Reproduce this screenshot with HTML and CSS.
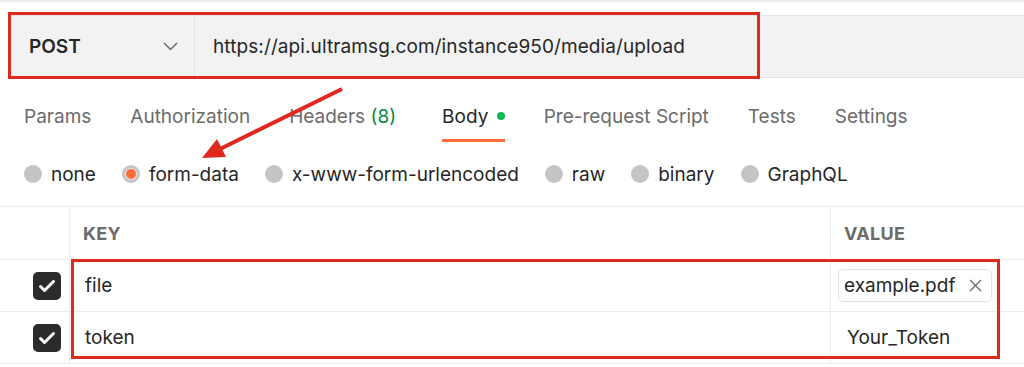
FILE: index.html
```html
<!DOCTYPE html>
<html lang="en">
<head>
    <meta charset="UTF-8">
    <meta name="viewport" content="width=device-width, initial-scale=1.0">
    <title>Upload Media</title>
    <link rel="stylesheet" href="styles.css">
</head>
<body>
    <div class="topline"></div>

    <!-- Method + URL -->
    <div class="request-bar">
        <div class="method">
            <span>POST</span>
            <svg class="chevron" width="15" height="9" viewBox="0 0 15 9">
                <path d="M1 1l6.5 6.5L14 1" fill="none" stroke="#6b6b6b" stroke-width="1.5"/>
            </svg>
        </div>
        <div class="url">https://api.ultramsg.com/instance950/media/upload</div>
    </div>

    <!-- Request tabs -->
    <div class="tabs">
        <div class="tab">Params</div>
        <div class="tab">Authorization</div>
        <div class="tab">Headers <span class="count">(8)</span></div>
        <div class="tab active">Body <span class="dot"></span></div>
        <div class="tab">Pre-request Script</div>
        <div class="tab">Tests</div>
        <div class="tab">Settings</div>
    </div>

    <!-- Body type -->
    <div class="body-types">
        <label class="option"><span class="radio"></span>none</label>
        <label class="option"><span class="radio checked"></span>form-data</label>
        <label class="option"><span class="radio"></span>x-www-form-urlencoded</label>
        <label class="option"><span class="radio"></span>raw</label>
        <label class="option"><span class="radio"></span>binary</label>
        <label class="option"><span class="radio"></span>GraphQL</label>
    </div>

    <!-- Form data table -->
    <div class="kv-table">
        <div class="cell check-col"></div>
        <div class="cell head">KEY</div>
        <div class="cell head value-col">VALUE</div>

        <div class="cell check-col">
            <span class="checkbox">
                <svg width="18" height="14" viewBox="0 0 18 14"><path d="M2.5 7.5l4 4 9-9" fill="none" stroke="#fff" stroke-width="3" stroke-linecap="round" stroke-linejoin="round"/></svg>
            </span>
        </div>
        <div class="cell">file</div>
        <div class="cell value-col chip-cell">
            <span class="chip">example.pdf
                <svg class="close" width="13" height="13" viewBox="0 0 13 13"><path d="M1 1l11 11M12 1L1 12" stroke="#6b6b6b" stroke-width="1.4"/></svg>
            </span>
        </div>

        <div class="cell check-col">
            <span class="checkbox">
                <svg width="18" height="14" viewBox="0 0 18 14"><path d="M2.5 7.5l4 4 9-9" fill="none" stroke="#fff" stroke-width="3" stroke-linecap="round" stroke-linejoin="round"/></svg>
            </span>
        </div>
        <div class="cell">token</div>
        <div class="cell value-col token">Your_Token</div>
    </div>

    <!-- Annotations -->
    <div class="mark mark-url"></div>
    <div class="mark mark-rows"></div>
    <svg class="arrow" width="1024" height="367" viewBox="0 0 1024 367">
        <line x1="342" y1="89" x2="220" y2="149" stroke="#e0291e" stroke-width="4"/>
        <polygon points="202,158 226,157 217,139" fill="#e0291e"/>
    </svg>
</body>
</html>
```

FILE: styles.css
```css
/* Global */
body {
    font-family: 'Inter', 'Liberation Sans', sans-serif;
    margin: 0;
    padding: 0;
    background-color: #fff;
    color: #262626;
    position: relative;
    height: 367px;
    overflow: hidden;
}

.topline {
    height: 2px;
    background-color: #ededed;
}

/* Request bar */
.request-bar {
    display: flex;
    margin: 13px 0 0 10px;
    height: 61px;
    background-color: #f2f2f2;
    border-top: 1px solid #e4e4e4;
    border-bottom: 1px solid #e4e4e4;
}

.method {
    width: 185px;
    display: flex;
    align-items: center;
    justify-content: space-between;
    padding: 0 16px 0 19px;
    box-sizing: border-box;
    border-right: 1px solid #e2e2e2;
    font-size: 19px;
    font-weight: 600;
}

.url {
    display: flex;
    align-items: center;
    padding-left: 18px;
    font-size: 19px;
    letter-spacing: 0.1px;
}

/* Tabs */
.tabs {
    display: flex;
    gap: 39px;
    margin-top: 12px;
    padding-left: 24px;
    height: 52px;
}

.tab {
    font-size: 19px;
    color: #6b6b6b;
    padding-top: 15px;
    box-sizing: border-box;
    height: 52px;
    border-bottom: 3px solid transparent;
}

.tab.active {
    margin-left: 7px;
    color: #262626;
    border-bottom-color: #ff6c37;
}

.count {
    color: #0a8a3e;
}

.dot {
    display: inline-block;
    width: 8px;
    height: 8px;
    border-radius: 50%;
    background-color: #0cbb52;
    margin-left: 3px;
    vertical-align: 3px;
}

/* Body types */
.body-types {
    display: flex;
    align-items: center;
    gap: 26px;
    height: 64px;
    padding-left: 24px;
}

.option {
    display: flex;
    align-items: center;
    gap: 9px;
    font-size: 19px;
}

.radio {
    width: 18px;
    height: 18px;
    border-radius: 50%;
    background-color: #c4c4c4;
    position: relative;
}

.radio.checked::after {
    content: "";
    position: absolute;
    top: 4px;
    left: 4px;
    width: 10px;
    height: 10px;
    border-radius: 50%;
    background-color: #ff6c37;
    box-shadow: 0 0 0 1px #e9e9e9;
}

/* Key / value table */
.kv-table {
    display: grid;
    grid-template-columns: 70px 761px 1fr;
    grid-template-rows: 53px 52px 52px;
    border-top: 1px solid #ececec;
}

.cell {
    display: flex;
    align-items: center;
    padding-left: 15px;
    font-size: 19px;
    border-bottom: 1px solid #ececec;
    border-right: 1px solid #ececec;
}

.cell.value-col {
    border-right: none;
}

.head {
    font-size: 18px;
    font-weight: 700;
    color: #6b6b6b;
    letter-spacing: 0.3px;
    padding-left: 13px;
}

.check-col {
    justify-content: flex-end;
    padding: 0 8px 0 0;
}

.checkbox {
    width: 28px;
    height: 28px;
    border-radius: 5px;
    background-color: #2b2b2b;
    display: flex;
    align-items: center;
    justify-content: center;
}

.chip-cell {
    padding-left: 7px;
}

.chip {
    display: flex;
    align-items: center;
    gap: 14px;
    height: 31px;
    padding: 0 9px 0 5px;
    border: 1px solid #e2e2e2;
    border-radius: 5px;
}

.token {
    padding-left: 16px;
}

/* Annotations */
.mark {
    position: absolute;
    border: 3px solid #dd2a1f;
    box-sizing: border-box;
}

.mark-url {
    left: 8px;
    top: 12px;
    width: 752px;
    height: 67px;
}

.mark-rows {
    left: 71px;
    top: 259px;
    width: 929px;
    height: 100px;
}

.arrow {
    position: absolute;
    left: 0;
    top: 0;
}
```
